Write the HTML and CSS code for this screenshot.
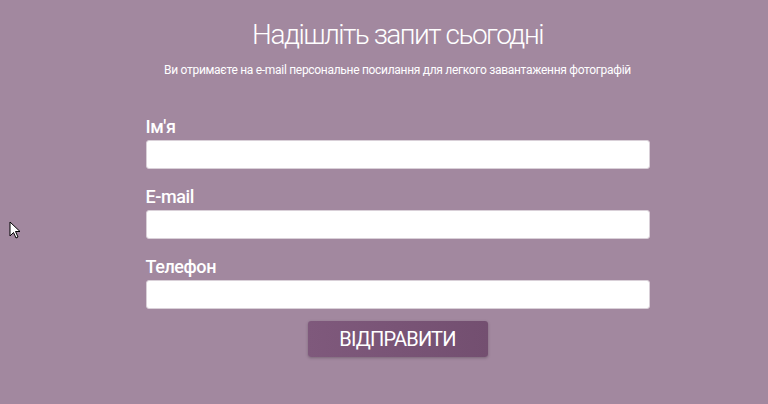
FILE: index.html
```html
<!DOCTYPE html>
<html lang="uk">
<head>
    <meta charset="UTF-8">
    <meta name="viewport" content="width=device-width, initial-scale=1.0">
    <title>Надішліть запит сьогодні</title>
    <link rel="stylesheet" href="styles.css">
</head>
<body>
    <!-- форма запиту -->
    <div class="request">
        <h1>Надішліть запит сьогодні</h1>
        <p class="lead">Ви отримаєте на e-mail персональне посилання для легкого завантаження фотографій</p>

        <form class="request-form">
            <div class="field">
                <label for="name">Ім'я</label>
                <input type="text" id="name">
            </div>
            <div class="field">
                <label for="email">E-mail</label>
                <input type="email" id="email">
            </div>
            <div class="field">
                <label for="phone">Телефон</label>
                <input type="tel" id="phone">
            </div>
            <button type="button" class="send-btn">ВІДПРАВИТИ</button>
        </form>
    </div>

    <svg class="cursor" width="12" height="19" viewBox="0 0 12 19">
        <path d="M1 1 L1 15 L4.5 11.5 L7 17 L9 16 L6.5 10.5 L11 10.5 Z" fill="#fff" stroke="#000" stroke-width="1"/>
    </svg>
</body>
</html>
```

FILE: styles.css
```css
:root {
    --bg-color: #a2889f;
    --btn-color: #78537a;
    --text-color: #ffffff;
}

html, body {
    height: 100%;
}

body {
    margin: 0;
    padding: 0 0 0 27px;
    background-color: var(--bg-color);
    color: var(--text-color);
    font-family: 'Roboto', 'Liberation Sans', sans-serif;
    overflow: hidden;
}

.request {
    width: 504px;
    margin: 0 auto;
    padding-top: 17px;
    text-align: center;
}

h1 {
    margin: 0;
    font-size: 28px;
    font-weight: 300;
    line-height: 36px;
    letter-spacing: -1.5px;
}

.lead {
    margin: 9px 0 0;
    font-size: 12px;
    line-height: 16px;
    letter-spacing: -0.3px;
}

.request-form {
    margin-top: 37px;
    text-align: left;
}

.field {
    margin-bottom: 16px;
}

label {
    display: block;
    font-size: 18px;
    font-weight: 500;
    line-height: 24px;
    margin-bottom: 1px;
    letter-spacing: -0.4px;
}

input {
    display: block;
    width: 100%;
    height: 29px;
    box-sizing: border-box;
    border: 1px solid #d9d0d8;
    border-radius: 3px;
    background-color: #fff;
    font-size: 15px;
    padding: 4px 8px;
}

input:focus {
    outline: none;
}

.send-btn {
    display: block;
    width: 180px;
    height: 36px;
    margin: -4px auto 0;
    border: none;
    border-radius: 3px;
    background: linear-gradient(90deg, #7f597c, #734f70);
    color: #fff;
    font-family: inherit;
    font-size: 20px;
    letter-spacing: -0.8px;
    box-shadow: 0 1px 3px rgba(0,0,0,0.25);
    cursor: pointer;
}

.cursor {
    position: absolute;
    left: 9px;
    top: 221px;
}
```
